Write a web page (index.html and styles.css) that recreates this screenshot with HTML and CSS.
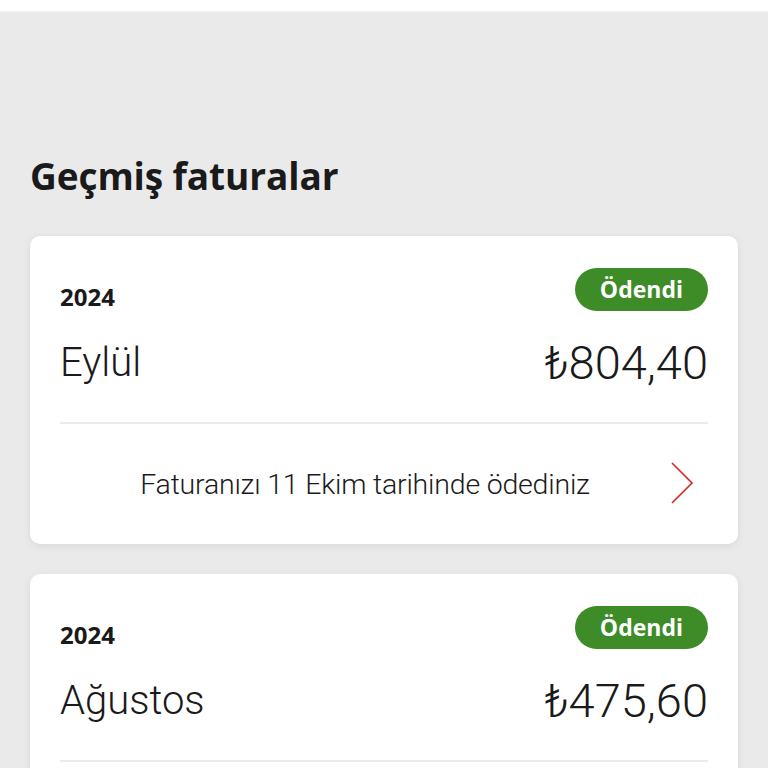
FILE: index.html
```html
<!DOCTYPE html>
<html lang="tr">
<head>
    <meta charset="UTF-8">
    <meta name="viewport" content="width=device-width, initial-scale=1.0">
    <title>Geçmiş faturalar</title>
    <link rel="stylesheet" href="styles.css">
</head>
<body>
    <div class="topbar"></div>
    <main class="page">
        <h1 class="title">Geçmiş faturalar</h1>

        <div class="bill">
            <div class="bill-head">
                <span class="year">2024</span>
                <span class="badge">Ödendi</span>
            </div>
            <div class="bill-main">
                <span class="month">Eylül</span>
                <span class="amount">₺804,40</span>
            </div>
            <div class="bill-foot">
                <span class="note">Faturanızı 11 Ekim tarihinde ödediniz</span>
                <svg class="chevron" width="24" height="42" viewBox="0 0 24 42">
                    <path d="M2 1 L22 21 L2 41" fill="none" stroke="#d9261c" stroke-width="1.6"/>
                </svg>
            </div>
        </div>

        <!-- second bill, only the top part is on screen -->
        <div class="bill">
            <div class="bill-head">
                <span class="year">2024</span>
                <span class="badge">Ödendi</span>
            </div>
            <div class="bill-main">
                <span class="month">Ağustos</span>
                <span class="amount">₺475,60</span>
            </div>
        </div>
    </main>
</body>
</html>
```

FILE: styles.css
```css
body {
    margin: 0;
    background-color: #eaeaea;
    color: #1a1a1a;
    font-family: Roboto, "Liberation Sans", sans-serif;
    height: 768px;
    overflow: hidden;
}
.topbar {
    height: 11px;
    background-color: #ffffff;
    border-bottom: 1px solid #f2f2f2;
}
.page {
    padding: 0 30px;
}
.title {
    margin: 0;
    padding-top: 134px;
    font-family: "Open Sans", sans-serif;
    font-size: 37px;
    font-weight: 700;
    letter-spacing: -0.1px;
    line-height: 60px;
}
.bill {
    background-color: #ffffff;
    border-radius: 10px;
    margin-top: 30px;
    padding: 0 30px 40px;
    box-shadow: 0 2px 8px rgba(0, 0, 0, 0.08);
}
.bill:first-of-type {
    padding-bottom: 0;
}
.bill + .bill {
    margin-top: 30px;
}
.bill-head {
    display: flex;
    justify-content: space-between;
    align-items: center;
    padding-top: 30px;
}
.year {
    font-family: "Open Sans", sans-serif;
    font-size: 24px;
    font-weight: 700;
    padding-top: 14px;
}
.badge {
    font-family: "Open Sans", sans-serif;
    background-color: #3e8c27;
    color: #ffffff;
    font-size: 23px;
    font-weight: 700;
    border-radius: 22px;
    padding: 0 25px;
    height: 43px;
    line-height: 43px;
}
.bill-main {
    display: flex;
    justify-content: space-between;
    align-items: center;
    padding: 22px 0 32px;
    border-bottom: 2px solid #ebebeb;
}
.month {
    font-size: 40px;
    font-weight: 300;
}
.amount {
    font-size: 47px;
    font-weight: 300;
}
.bill-foot {
    display: flex;
    align-items: center;
    height: 120px;
    padding-right: 14px;
}
.note {
    flex: 1;
    text-align: center;
    font-size: 28.5px;
    font-weight: 300;
    letter-spacing: -0.2px;
}
.chevron {
    flex-shrink: 0;
    margin-top: -2px;
}
```
